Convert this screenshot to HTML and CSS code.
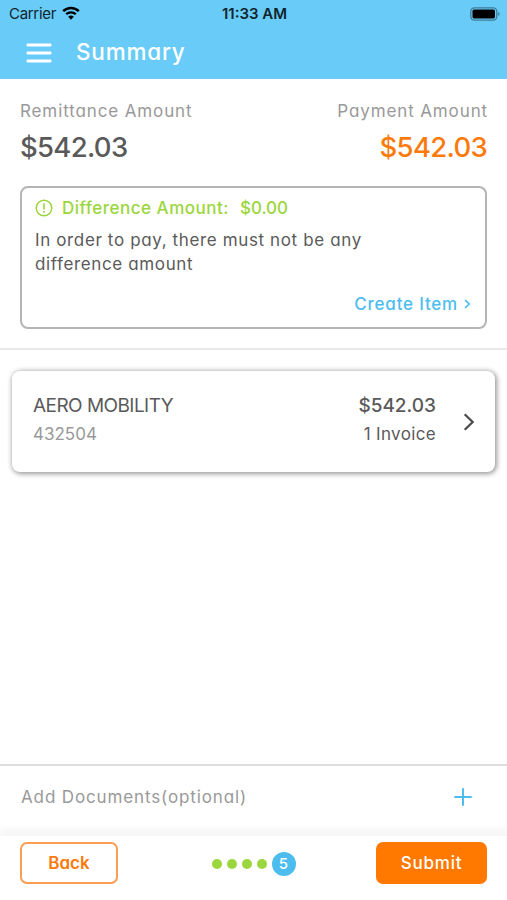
FILE: index.html
```html
<!DOCTYPE html>
<html lang="en">

<head>
    <meta charset="UTF-8">
    <meta name="viewport" content="width=device-width, initial-scale=1.0">
    <title>Summary</title>
    <link rel="stylesheet" href="styles.css">
</head>

<body>
    <header class="header">
        <div class="status">
            <div class="carrier">
                <span>Carrier</span>
                <svg class="wifi" width="18" height="14" viewBox="0 0 18 14">
                    <path d="M1.2 5.2a11.2 11.2 0 0 1 15.6 0" fill="none" stroke="#000" stroke-width="2.5" />
                    <path d="M4.2 8.2a7 7 0 0 1 9.6 0" fill="none" stroke="#000" stroke-width="2.3" />
                    <path d="M6.2 10.7a4.2 4.2 0 0 1 5.6 0L9 13.7z" />
                </svg>
            </div>
            <div class="time">11:33 AM</div>
            <svg class="battery" width="30" height="14" viewBox="0 0 30 14">
                <rect x=".8" y=".8" width="26" height="12.4" rx="3.6" fill="none" stroke="#3d7c99" stroke-width="1.3" />
                <rect x="2.5" y="2.6" width="22.5" height="8.8" rx="1.6" />
                <path d="M28.2 5v4c1.8-.7 1.8-3.3 0-4z" fill="#3d7c99" />
            </svg>
        </div>
        <div class="navbar">
            <svg class="menu" width="26" height="20" viewBox="0 0 26 20">
                <path d="M1.8 2h22.4M1.8 10h22.4M1.8 18h22.4" stroke="#fff" stroke-width="2.8" stroke-linecap="round" />
            </svg>
            <h1 class="page_title">Summary</h1>
        </div>
    </header>

    <section class="amounts">
        <div class="amount">
            <div class="label">Remittance Amount</div>
            <div class="value">$542.03</div>
        </div>
        <div class="amount amount_payment">
            <div class="label">Payment Amount</div>
            <div class="value">$542.03</div>
        </div>
    </section>

    <section class="difference">
        <div class="difference_title">
            <svg width="18" height="18" viewBox="0 0 18 18">
                <circle cx="9" cy="9" r="7.8" fill="none" stroke="#9bd63c" stroke-width="1.5" />
                <path d="M9 4.8v5.2" stroke="#9bd63c" stroke-width="1.6" stroke-linecap="round" />
                <circle cx="9" cy="12.8" r="1" fill="#9bd63c" />
            </svg>
            <span class="difference_label">Difference Amount:</span>
            <span class="difference_value">$0.00</span>
        </div>
        <p class="difference_text">In order to pay, there must not be any <br>difference amount</p>
        <a class="create_item"><span>Create Item</span>
            <svg width="7" height="10" viewBox="0 0 7 10">
                <path d="M1 1.2L5.3 5L1 8.8" fill="none" stroke="#4dbdf0" stroke-width="1.6" />
            </svg>
        </a>
    </section>

    <main class="invoices">
        <div class="card">
            <div class="vendor">
                <div class="vendor_name">AERO MOBILITY</div>
                <div class="vendor_number">432504</div>
            </div>
            <div class="total">
                <div class="total_value">$542.03</div>
                <div class="total_count">1 Invoice</div>
            </div>
            <svg class="chevron" width="12" height="18" viewBox="0 0 12 18">
                <path d="M1.7 1.2L9.7 9L1.7 16.8" fill="none" stroke="#4a4a4a" stroke-width="2.2" />
            </svg>
        </div>
    </main>

    <div class="documents">
        <span>Add Documents(optional)</span>
        <svg width="18" height="18" viewBox="0 0 18 18">
            <path d="M9 .3v17.4M.3 9h17.4" stroke="#4dbdf0" stroke-width="2" />
        </svg>
    </div>

    <footer class="footer">
        <button class="button button_back">Back</button>
        <div class="steps">
            <i class="dot"></i>
            <i class="dot"></i>
            <i class="dot"></i>
            <i class="dot"></i>
            <div class="step">5</div>
        </div>
        <button class="button button_submit">Submit</button>
    </footer>
</body>

</html>
```
FILE: styles.css
```css
* {
    box-sizing: border-box;
}

body {
    width: 100%;
    height: 100vh;
    margin: 0;
    display: flex;
    flex-direction: column;
    overflow: hidden;
    background-color: #fff;
    color: #5a5a5a;
    font-family: Inter, "Open Sans", sans-serif;
    /* single-storey a */
    font-feature-settings: "cv11";
    white-space: nowrap;
}

svg {
    display: block;
    flex: none;
}

.header {
    height: 79px;
    flex: none;
    background-color: #69ccf8;
}

.status {
    height: 27px;
    padding: 0 7px 0 9px;
    display: grid;
    grid-template-columns: 1fr auto 1fr;
    align-items: center;
    color: #10242d;
    font-size: 15px;
    font-feature-settings: normal;
}

.carrier {
    display: flex;
    align-items: center;
    gap: 6px;
    letter-spacing: -0.3px;
}

.wifi {
    margin-top: -2px;
}

.time {
    font-weight: 600;
}

.battery {
    justify-self: end;
}

.navbar {
    height: 51px;
    padding: 0 26px;
    display: flex;
    align-items: center;
    gap: 24px;
}

.page_title {
    margin: -2px 0 0;
    color: #fff;
    font-size: 22.5px;
    font-weight: 500;
    letter-spacing: 0.8px;
}

.amounts {
    height: 107px;
    flex: none;
    padding: 21px 20px 0;
    display: flex;
    justify-content: space-between;
}

.amount_payment {
    text-align: right;
}

.label {
    color: #999;
    font-size: 17px;
    line-height: 22px;
    letter-spacing: 0.88px;
}

.amount_payment .label {
    margin-right: -1px;
}

.value {
    margin-top: 8px;
    font-size: 27.5px;
    font-weight: 500;
    line-height: 34px;
    letter-spacing: -0.7px;
}

.amount_payment .value {
    color: #fb7a0c;
}

.difference {
    height: 143px;
    flex: none;
    margin: 0 20px;
    padding: 9px 14px 0 13px;
    display: flex;
    flex-direction: column;
    border: 2px solid #b5b5b5;
    border-radius: 8px;
}

.difference_title {
    display: flex;
    align-items: center;
    height: 22px;
    color: #9bd63c;
    font-size: 17px;
    font-weight: 500;
}

.difference_label {
    margin-left: 9px;
    letter-spacing: 0.5px;
}

.difference_value {
    margin-left: 11px;
}

.difference_text {
    margin: 10px 0 0;
    font-size: 17px;
    line-height: 23.5px;
    letter-spacing: 0.63px;
}

.create_item {
    margin-top: 17px;
    display: flex;
    justify-content: flex-end;
    align-items: center;
    gap: 6px;
    color: #4dbdf0;
    font-size: 17px;
    font-weight: 500;
    line-height: 22px;
    letter-spacing: 0.8px;
}

.invoices {
    flex: 1;
    margin-top: 19px;
    padding: 21px 12px 0;
    border-top: 2px solid #e9e9e9;
}

.card {
    height: 101px;
    padding: 23px 20px 0 21px;
    display: flex;
    border-radius: 8px;
    box-shadow: 1px 1px 5px 1px rgba(0, 0, 0, 0.4);
}

.vendor {
    flex: 1;
}

.vendor_name,
.total_value {
    font-size: 19px;
    line-height: 24px;
}

.vendor_name {
    letter-spacing: -0.55px;
}

.vendor_number,
.total_count {
    margin-top: 4px;
    font-size: 17px;
    line-height: 24px;
}

.vendor_number {
    color: #999;
}

.total_count {
    letter-spacing: 0.35px;
}

.total {
    text-align: right;
}

.total_value {
    font-weight: 500;
}

.chevron {
    margin: 19px 0 0 27px;
}

.documents {
    height: 72px;
    flex: none;
    padding: 0 35px 8px 21px;
    display: flex;
    justify-content: space-between;
    align-items: center;
    border-top: 2px solid #ddd;
    color: #999;
    font-size: 17px;
    letter-spacing: 0.87px;
}

.footer {
    height: 64px;
    flex: none;
    padding: 6px 20px 0;
    display: flex;
    justify-content: space-between;
    background-color: #fff;
    box-shadow: 0 -8px 6px #f7f7f7;
}

.button {
    height: 42px;
    padding: 0;
    border-radius: 7px;
    font: inherit;
    font-size: 17px;
    font-weight: 500;
    font-feature-settings: inherit;
}

.button_back {
    width: 98px;
    border: 2px solid #fc9d54;
    background-color: #fff;
    color: #fb7a0c;
    font-weight: 600;
}

.button_submit {
    width: 111px;
    border: none;
    background-color: #ff7800;
    color: #fff;
    letter-spacing: 0.8px;
}

.steps {
    height: 43px;
    margin-left: 13px;
    display: flex;
    align-items: center;
    gap: 5px;
}

.dot {
    width: 10px;
    height: 10px;
    border-radius: 50%;
    background-color: #9bd63c;
}

.step {
    width: 24px;
    height: 24px;
    border-radius: 50%;
    background-color: #4dbdf0;
    color: #fff;
    font-size: 15px;
    font-weight: 500;
    line-height: 24px;
    text-align: center;
}
```
